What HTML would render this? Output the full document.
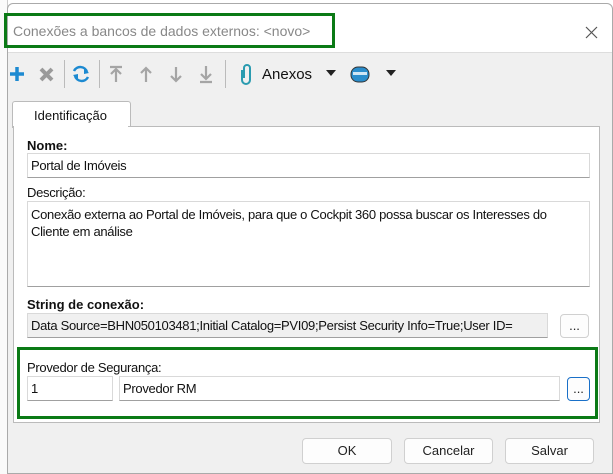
<!DOCTYPE html><html><head><style>
body{margin:0;width:613px;height:474px;background:#fff;position:relative;overflow:hidden;font-family:"Liberation Sans",sans-serif;font-size:13px;color:#111}
.a{position:absolute}
.dlg{left:7px;top:3px;width:606px;height:471px;background:#f0f0f0;border:1px solid #aaa;border-radius:6px 6px 0 0;box-sizing:border-box}
.in{position:absolute;background:#fff;border:1px solid #d9d9d9;border-bottom-color:#a0a0a0;box-sizing:border-box;padding:4px 3px;font-size:13px;letter-spacing:-0.3px;white-space:nowrap;overflow:hidden}
.btn{position:absolute;background:#fdfdfd;border:1px solid #d0d0d0;border-radius:4px;box-sizing:border-box;text-align:center;font-size:13px;color:#222}
</style></head><body>
<div class="a" style="left:0;top:0;width:7px;height:474px;background:#fafafa;border-right:1px solid #ccc"></div>
<div class="a dlg"></div>
<div class="a" style="left:8px;top:4px;width:604px;height:48px;background:#fff;border-radius:6px 6px 0 0"></div>
<div class="a" style="left:4px;top:13px;width:331px;height:35px;border:3px solid #0b7a16;box-sizing:border-box"></div>
<div class="a" style="left:13px;top:23px;font-size:14px;color:#888">Conexões a bancos de dados externos: &lt;novo&gt;</div>
<svg class="a" style="left:585px;top:26px" width="13" height="13"><path d="M1 1L12 12M12 1L1 12" stroke="#555" stroke-width="1.2"/></svg>
<div class="a" style="left:8px;top:52px;width:604px;height:1px;background:#ddd"></div>
<svg class="a" style="left:0;top:58px" width="400" height="32">
<path d="M17 9V23M10 16H24" stroke="#1d8ad1" stroke-width="3.5"/>
<path d="M41 11L52 22M52 11L41 22" stroke="#9a9a9a" stroke-width="4"/>
<line x1="64.5" y1="2" x2="64.5" y2="30" stroke="#bbb"/>
<path d="M74 13A7 7 0 0 1 87 14M88 19A7 7 0 0 1 75 18" stroke="#1d8ad1" stroke-width="2.5" fill="none"/>
<path d="M84 10L89 15L84 16Z M78 22L73 17L78 16Z" fill="#1d8ad1"/>
<line x1="99.5" y1="2" x2="99.5" y2="30" stroke="#bbb"/>
<g stroke="#a5a5a5" stroke-width="2.2" fill="none">
<path d="M110 9H122M116 24V12M111 16L116 11L121 16"/>
<path d="M146 24V10M141 15L146 10L151 15"/>
<path d="M176 9V23M171 18L176 23L181 18"/>
<path d="M206 8V21M201 16L206 21L211 16M200 24H212"/>
</g>
<line x1="225.5" y1="2" x2="225.5" y2="30" stroke="#bbb"/>
<path d="M244 20V10A3 3 0 0 1 250 10V22A4 4 0 0 1 242 22V12" stroke="#2a9bb0" stroke-width="2" fill="none"/>
<path d="M326 12L336 12L331 18Z" fill="#222"/>
<rect x="351" y="9" width="18" height="15" rx="7" fill="#2a8dcc" stroke="#333"/>
<rect x="353" y="14" width="14" height="3" fill="#cfe6f5"/>
<path d="M386 12L396 12L391 18Z" fill="#222"/>
</svg>
<div class="a" style="left:262px;top:66px;font-size:15px">Anexos</div>
<div class="a" style="left:12px;top:101px;width:117px;height:26px;background:#fff;border:1px solid #bbb;border-bottom:none;border-radius:3px 3px 0 0"></div>
<div class="a" style="left:34px;top:108px">Identificação</div>
<div class="a" style="left:13px;top:126px;width:587px;height:297px;background:#fff;border:1px solid #bbb;box-sizing:border-box;border-top:none"></div>
<div class="a" style="left:128px;top:126px;width:472px;height:1px;background:#bbb"></div>
<div class="a" style="left:27px;top:138px;font-weight:bold">Nome:</div>
<div class="in" style="left:27px;top:153px;width:563px;height:25px">Portal de Imóveis</div>
<div class="a" style="left:27px;top:185px;letter-spacing:-0.3px">Descrição:</div>
<div class="in" style="left:27px;top:201px;width:563px;height:86px;white-space:normal;line-height:17px">Conexão externa ao Portal de Imóveis, para que o Cockpit 360 possa buscar os Interesses do Cliente em análise</div>
<div class="a" style="left:27px;top:297px;font-weight:bold">String de conexão:</div>
<div class="in" style="left:27px;top:313px;width:521px;height:25px;background:#f0f0f0">Data Source=BHN050103481;Initial Catalog=PVI09;Persist Security Info=True;User ID=</div>
<div class="btn" style="left:560px;top:314px;width:29px;height:24px;line-height:22px">...</div>
<div class="a" style="left:17px;top:347px;width:581px;height:72px;border:3px solid #0b7a16;box-sizing:border-box"></div>
<div class="a" style="left:27px;top:360px;letter-spacing:-0.3px">Provedor de Segurança:</div>
<div class="in" style="left:27px;top:376px;width:86px;height:25px">1</div>
<div class="in" style="left:119px;top:376px;width:441px;height:25px">Provedor RM</div>
<div class="btn" style="left:567px;top:377px;width:23px;height:24px;border-color:#1a70c8;line-height:22px">...</div>
<div class="btn" style="left:302px;top:438px;width:90px;height:26px;line-height:24px">OK</div>
<div class="btn" style="left:404px;top:438px;width:89px;height:26px;line-height:24px">Cancelar</div>
<div class="btn" style="left:505px;top:438px;width:89px;height:26px;line-height:24px">Salvar</div>
</body></html>
